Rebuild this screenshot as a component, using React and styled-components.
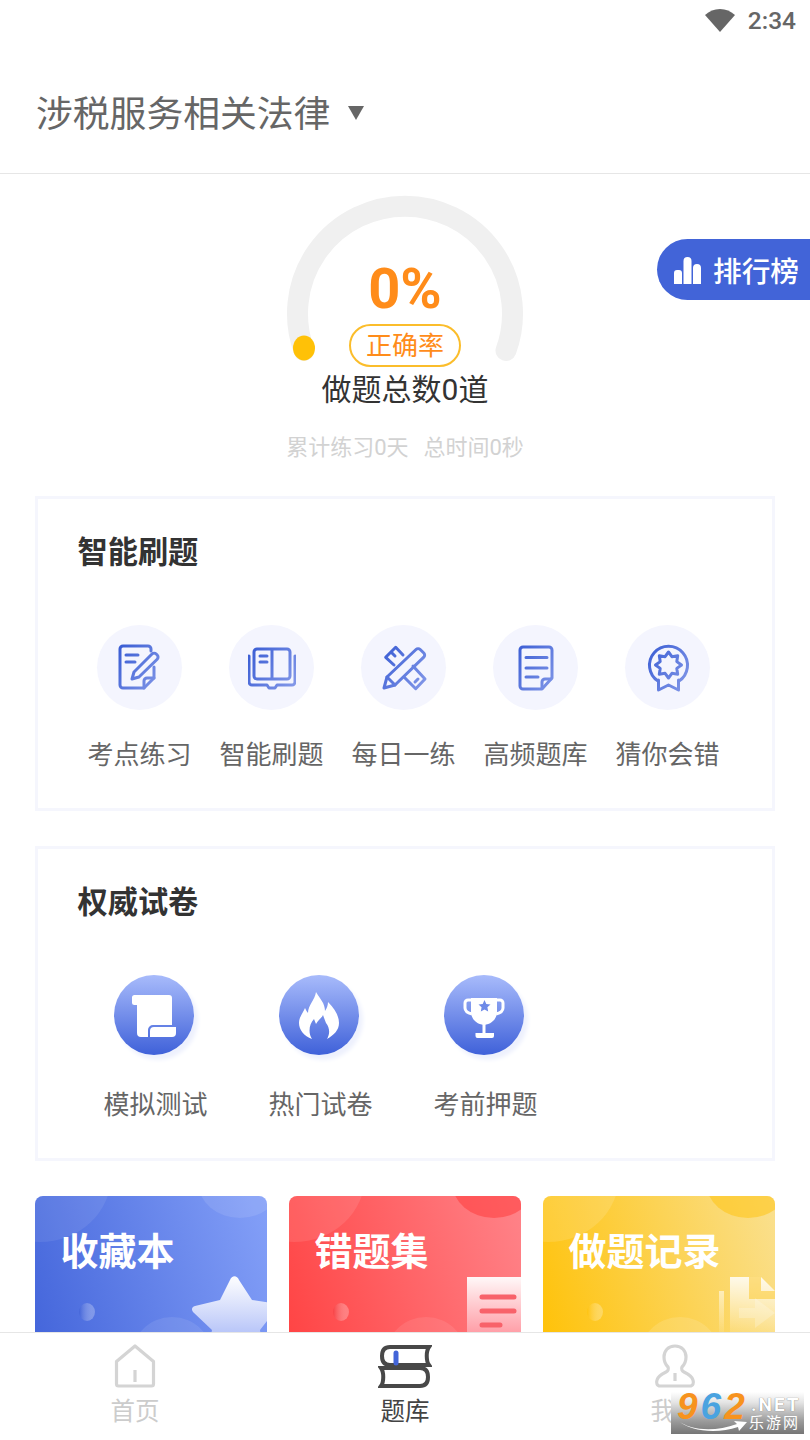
import styled, { createGlobalStyle } from 'styled-components';

const GlobalStyle = createGlobalStyle`
    html, body {
        margin: 0;
        padding: 0;
        background: #fff;
    }
    body {
        font-family: Roboto, "Noto Sans CJK SC", sans-serif;
    }
`

const Page = styled.div`
    position: relative;
    width: 810px;
    height: 1440px;
    display: flex;
    flex-direction: column;
    overflow: hidden;
    background: #fff;
`

const StatusBar = styled.div`
    height: 40px;
    display: flex;
    justify-content: flex-end;
    align-items: center;
    gap: 12px;
    padding: 0 14px 0 0;
    color: #666;
    font-size: 24.5px;
    font-weight: 500;
`

const Header = styled.div`
    height: 117px;
    display: flex;
    align-items: center;
    padding-left: 36px;
    padding-top: 16px;
    border-bottom: 1px solid #e6e6e6;
`

const Title = styled.span`
    font-size: 36.8px;
    color: #666;
    line-height: 50px;
`

const Caret = styled.span`
    width: 0;
    height: 0;
    margin: -4px 0 0 18px;
    border-left: 8px solid transparent;
    border-right: 8px solid transparent;
    border-top: 14px solid #666;
`

const Content = styled.div`
    flex: 1;
    min-height: 0;
    overflow: hidden;
`

const Stats = styled.div`
    position: relative;
    display: flex;
    flex-direction: column;
    align-items: center;
    padding: 85px 0 33px;
`

const GaugeArt = styled.svg`
    position: absolute;
    left: 285px;
    top: 20px;
`

const Percent = styled.div`
    position: relative;
    font-size: 56px;
    line-height: 60px;
    font-weight: 700;
    color: #ff8c1a;
`

const RatePill = styled.div`
    position: relative;
    box-sizing: border-box;
    width: 112px;
    height: 43px;
    margin-top: 5px;
    border: 2px solid #fbbd2b;
    border-radius: 22px;
    display: flex;
    align-items: center;
    justify-content: center;
    font-size: 26px;
    line-height: 36px;
    color: #ff8c1a;
`

const TotalText = styled.div`
    font-size: 30px;
    line-height: 42px;
    margin-top: 2px;
    color: #333;
`

const SubText = styled.div`
    display: flex;
    gap: 15px;
    margin-top: 22px;
    font-size: 22px;
    line-height: 30px;
    color: #d2d2d2;
`

const RankBadge = styled.div`
    position: absolute;
    top: 239px;
    right: 0;
    width: 153px;
    height: 61px;
    box-sizing: border-box;
    padding-left: 16px;
    display: flex;
    align-items: center;
    gap: 10px;
    border-radius: 31px 0 0 31px;
    background: #4264d8;
    color: #fff;
    font-size: 28.7px;
    font-weight: 500;
    white-space: nowrap;
`

const Panel = styled.div`
    box-sizing: border-box;
    height: 315px;
    margin: 0 35px 35px;
    border: 3.5px solid #f5f6fd;
    padding: 34px 0 0 ${p => p.$inset}px;
`

const PanelTitle = styled.div`
    margin-left: ${p => p.$shift}px;
    font-size: 30.2px;
    line-height: 40px;
    font-weight: 700;
    color: #333;
`

const Tools = styled.div`
    display: flex;
    margin-top: 52px;
`

const Tool = styled.div`
    width: ${p => p.$width}px;
    display: flex;
    flex-direction: column;
    align-items: center;
    gap: ${p => p.$gap}px;
`

const ToolLabel = styled.div`
    font-size: 26px;
    line-height: 36px;
    color: #666;
    white-space: nowrap;
`

const LightCircle = styled.div`
    width: 85px;
    height: 85px;
    border-radius: 50%;
    background: #f4f5fe;
    display: flex;
    align-items: center;
    justify-content: center;
`

const SolidCircle = styled.div`
    width: 80px;
    height: 80px;
    margin-right: 4px;
    border-radius: 50%;
    background: linear-gradient(180deg, #a8bbfb 0%, #3f61d9 100%);
    box-shadow: 4px 5px 4px #eef1fd;
    display: flex;
    align-items: center;
    justify-content: center;
`

const Promos = styled.div`
    display: grid;
    grid-template-columns: repeat(3, 232px);
    gap: 22px;
    margin: 0 35px;
`

const Promo = styled.div`
    position: relative;
    height: 200px;
    border-radius: 8px 8px 0 0;
    overflow: hidden;
    padding: 34px 0 0 25.5px;
    box-sizing: border-box;
    background: linear-gradient(${p => p.$angle}deg, ${p => p.$from}, ${p => p.$to});
    color: #fff;
    font-size: 38px;
    line-height: 44px;
    font-weight: 700;
`

const PromoArt = styled.svg`
    position: absolute;
    left: 0;
    top: 0;
`

const PromoText = styled.span`
    position: relative;
`

const TabBar = styled.div`
    height: 107px;
    flex-shrink: 0;
    border-top: 1px solid #e6e6e6;
    background: #fff;
    display: grid;
    grid-template-columns: repeat(3, 270px);
`

const Tab = styled.div`
    display: flex;
    flex-direction: column;
    align-items: center;
    padding-top: 11px;
    color: ${p => (p.$active ? '#444' : '#ccc')};
    font-size: 24.5px;
    line-height: 34px;
`

const TabText = styled.div`
    margin-top: 7px;
`

const Watermark = styled.div`
    position: absolute;
    left: 671px;
    top: 1392px;
    width: 133px;
    height: 42px;
    background: linear-gradient(180deg, #ffffff 0%, #e4e4e4 25%, #9a9a9a 70%, #767676 100%);
`

const MarkDigits = styled.span`
    position: absolute;
    left: 6px;
    top: 0;
    font-family: "Liberation Sans", sans-serif;
    font-size: 37px;
    line-height: 30px;
    font-weight: 700;
    font-style: italic;
    letter-spacing: 3px;
    color: #f7931e;
`

const BlueDigit = styled.span`
    color: #4aa3e0;
`

const MarkNet = styled.span`
    position: absolute;
    left: 80px;
    top: 4px;
    font-size: 19px;
    line-height: 18px;
    font-weight: 700;
    letter-spacing: 2px;
    color: #fff;
    text-shadow: 0 0 1px #555;
`

const MarkCn = styled.span`
    position: absolute;
    left: 78px;
    top: 22px;
    font-size: 15px;
    line-height: 18px;
    letter-spacing: 2px;
    color: #fff;
`

const MarkSwoosh = styled.svg`
    position: absolute;
    left: 6px;
    top: 26px;
`

const LineGradient = ({ id }) => (
    <defs>
        <linearGradient id={id} gradientUnits="userSpaceOnUse" x1="0" y1="8" x2="48" y2="40">
            <stop offset="0" stopColor="#3a5dd4" />
            <stop offset="1" stopColor="#8398e8" />
        </linearGradient>
    </defs>
)

const lineProps = id => ({
    fill: 'none',
    stroke: `url(#${id})`,
    strokeWidth: 3,
    strokeLinecap: 'round',
    strokeLinejoin: 'round',
})

const NoteIcon = () => (
    <svg width="48" height="48" viewBox="0 0 48 48">
        <LineGradient id="g-note" />
        <g {...lineProps('g-note')}>
            <path d="M35 7V5a3 3 0 0 0-3-3H7a3 3 0 0 0-3 3v36a3 3 0 0 0 3 3h21l10-10v-11" />
            <path d="M28 44v-7a3 3 0 0 1 3-3h7" />
            <path d="M10 11h12M10 18h9" />
            <path d="M16 35l2-7L36 10a3 3 0 0 1 4.200 0l1 1a3 3 0 0 1 0 4.200L23 33z" />
        </g>
    </svg>
)

const BookIcon = () => (
    <svg width="48" height="48" viewBox="0 0 48 48">
        <LineGradient id="g-book" />
        <g {...lineProps('g-book')}>
            <path d="M24 5H9a3 3 0 0 0-3 3v24a3 3 0 0 0 3 3h15V5h15a3 3 0 0 1 3 3v24a3 3 0 0 1-3 3H24" />
            <path d="M1 12v26a3 3 0 0 0 3 3h15l2 3h6l2-3h15a3 3 0 0 0 3-3V12" />
            <path d="M12 12h7M12 18h7" />
        </g>
    </svg>
)

const RulerPencilIcon = () => (
    <svg width="48" height="48" viewBox="0 0 48 48">
        <LineGradient id="g-ruler" />
        <g {...lineProps('g-ruler')}>
            <path d="M14 21L5.700 13.300 15.700 3.300 23 11" />
            <path d="M33 22L45 35 35.700 44.700 24 33" />
            <path d="M12 9l3 3M35 38l3-3" />
            <path d="M4 44l3-11L36 5.500a3 3 0 0 1 4.200 0l3.600 3.500a3 3 0 0 1 0 4.200L15 41z" />
            <path d="M7 33l8 8" />
        </g>
    </svg>
)

const PaperIcon = () => (
    <svg width="48" height="48" viewBox="0 0 48 48">
        <LineGradient id="g-paper" />
        <g {...lineProps('g-paper')}>
            <path d="M11 3h26a3 3 0 0 1 3 3v28L30 45H11a3 3 0 0 1-3-3V6a3 3 0 0 1 3-3z" />
            <path d="M30 44v-6a3 3 0 0 1 3-3h6" />
            <path d="M14 13.500h21M14 24h21M14 33h12" />
        </g>
    </svg>
)

const BadgeIcon = () => (
    <svg width="48" height="48" viewBox="0 0 48 48">
        <LineGradient id="g-badge" />
        <g {...lineProps('g-badge')}>
            <path d="M14 37A19 19 0 1 1 35 37" />
            <path d="M24.500 8L27.900 12.700 33.700 11.800 32.800 17.600 37.500 21 32.800 24.400 33.700 30.200 27.900 29.300 24.500 34 21.100 29.300 15.300 30.200 16.200 24.400 11.500 21 16.200 17.600 15.300 11.800 21.100 12.700Z" />
            <path d="M14.500 36v10l10-5 10 5V36" />
        </g>
    </svg>
)

const ScrollIcon = () => (
    <svg width="48" height="48" viewBox="0 0 48 48">
        <path fill="#fff" d="M4.500 4H39a3 3 0 0 1 3 3v27H23a5 5 0 0 0-5 5v7h-7a4 4 0 0 1-4-4V14H4.500A2.500 2.500 0 0 1 2 11.500v-5A2.500 2.500 0 0 1 4.500 4z" />
        <path fill="#fff" d="M24 36h22v6a4 4 0 0 1-4 4H20v-6a4 4 0 0 1 4-4z" />
    </svg>
)

const FlameIcon = () => (
    <svg width="48" height="48" viewBox="0 0 48 48">
        <path fill="#fff" d="M21 1C25 8 30 12 30 20C32 17 33 14 33 11C40 18 44 25 44 32C44 39 39 44 32 48C35 43 35 37 31 32C30 29 29 27 28 24C26 28 23 29 21 33L19 28C14 33 13 42 17 48C9 45 4 39 4 32C4 26 8 22 10 17C11 19 12 21 13 22C13 14 20 9 21 1Z" />
    </svg>
)

const TrophyIcon = () => (
    <svg width="48" height="48" viewBox="0 0 48 48">
        <path fill="none" stroke="#fff" strokeWidth="3" d="M12 9H8a3 3 0 0 0-3 3v5c0 3 3 5 7 6M36 9h4a3 3 0 0 1 3 3v5c0 3-3 5-7 6" />
        <path fill="#fff" d="M11 7h26v13c0 8-5 13-13 14-8-1-13-6-13-14z" />
        <path fill="#fff" d="M22.500 32h3v10h-3zM15.500 42h18.500v3a2 2 0 0 1-2 2H17.500a2 2 0 0 1-2-2z" />
        <path fill="#6e8ae8" d="M24.500 9l1.800 3.900 4.200.5-3.100 2.900.8 4.200-3.700-2.100-3.700 2.100.8-4.200-3.100-2.900 4.200-.5z" />
    </svg>
)

const BarsIcon = () => (
    <svg width="30" height="30" viewBox="0 0 30 30">
        <path fill="#fff" d="M1 18a3 3 0 0 1 3-3h2a3 3 0 0 1 3 3v11H1zM10.500 6a4 4 0 0 1 8 0v23h-8zM20 13a4 4 0 0 1 8 0v16h-8z" />
    </svg>
)

const WifiIcon = () => (
    <svg width="32" height="24" viewBox="0 0 32 24">
        <path fill="#666" d="M1 7C5.500 3 10 1 16 1s10.500 2 15 6L16 24z" />
    </svg>
)

const HomeIcon = () => (
    <svg width="44" height="44" viewBox="0 0 44 44">
        <path fill="none" stroke="#d4d4d4" strokeWidth="3.200" strokeLinejoin="round" d="M22 2L3.500 17.500V40a2 2 0 0 0 2 2h33a2 2 0 0 0 2-2V17.500z" />
        <path stroke="#d4d4d4" strokeWidth="3.200" d="M22 26v12" />
    </svg>
)

const BooksIcon = () => (
    <svg width="54" height="44" viewBox="0 0 54 44">
        <path fill="none" stroke="#484848" strokeWidth="4" strokeLinecap="round" d="M51 3H12C6 3 4 7 4 12s2 9 8 9h39c-3-4-3-14 0-18z" />
        <path fill="none" stroke="#484848" strokeWidth="4" strokeLinecap="round" d="M3 24h39c6 0 8 4 8 9s-2 9-8 9H3c3-4 3-14 0-18z" />
        <path stroke="#4264d8" strokeWidth="5" strokeLinecap="round" d="M18 9v10" />
    </svg>
)

const PersonIcon = () => (
    <svg width="44" height="44" viewBox="0 0 44 44">
        <path fill="none" stroke="#d4d4d4" strokeWidth="3.200" strokeLinejoin="round" d="M22 2c-7 0-11 5-11 11 0 4 2 8 4 10 1 2 0 4-2 5-4 2-8 4-9 8-1 3 0 6 3 6h30c3 0 4-3 3-6-1-4-5-6-9-8-2-1-3-3-2-5 2-2 4-6 4-10 0-6-4-11-11-11z" />
        <path stroke="#d4d4d4" strokeWidth="3.200" d="M22 29v8" />
    </svg>
)

const Blobs = ({ left, right, bottom, id, dot }) => (
    <>
        <ellipse cx="5" cy="-20" rx="71" ry="66" fill={left} />
        <ellipse cx="205" cy="-14" rx="42" ry="36" fill={right} />
        <ellipse cx="137" cy="165" rx="42" ry="44" fill={bottom} />
        <defs>
            <linearGradient id={id} x1="0" y1="0" x2="1" y2="0">
                <stop offset="0" stopColor={dot} stopOpacity="0.7" />
                <stop offset="1" stopColor="#fff" stopOpacity="0.25" />
            </linearGradient>
        </defs>
        <ellipse cx="52" cy="116" rx="8" ry="9" fill={`url(#${id})`} />
    </>
)

const StarArt = () => (
    <PromoArt width="232" height="200" viewBox="0 0 232 200">
        <Blobs id="dot-blue" left="rgba(255,255,255,0.08)" right="rgba(255,255,255,0.1)" bottom="rgba(255,255,255,0.09)" dot="#3d5fd6" />
        <defs>
            <linearGradient id="star-fill" gradientUnits="userSpaceOnUse" x1="0" y1="85" x2="0" y2="140">
                <stop offset="0" stopColor="#fff" stopOpacity="0.95" />
                <stop offset="1" stopColor="#b4c2f8" />
            </linearGradient>
        </defs>
        <path fill="url(#star-fill)" d="M195 84c2-5 7-5 9 0l13 20 28 4-20 26 5 36-30-15-30 15 7-36-19-18c-2-3-1-5 2-6l25-6z" />
    </PromoArt>
)

const ListArt = () => (
    <PromoArt width="232" height="200" viewBox="0 0 232 200">
        <Blobs id="dot-red" left="rgba(255,255,255,0.1)" right="rgba(255,60,60,0.55)" bottom="rgba(255,255,255,0.09)" dot="#f43c40" />
        <defs>
            <linearGradient id="list-fill" x1="0" y1="0" x2="0" y2="1">
                <stop offset="0" stopColor="#fff" stopOpacity="0.95" />
                <stop offset="1" stopColor="#ff9ca6" stopOpacity="0.9" />
            </linearGradient>
        </defs>
        <rect x="178" y="81" width="54" height="60" fill="url(#list-fill)" />
        <g stroke="#f8626a" strokeWidth="5" strokeLinecap="round">
            <path d="M193 101h32M193 115h32M193 129h18" />
        </g>
    </PromoArt>
)

const RecordArt = () => (
    <PromoArt width="232" height="200" viewBox="0 0 232 200">
        <Blobs id="dot-yellow" left="rgba(255,255,255,0.13)" right="rgba(255,193,7,0.5)" bottom="rgba(255,255,255,0.13)" dot="#ffc107" />
        <defs>
            <linearGradient id="rec-fill" x1="0" y1="0" x2="0" y2="1">
                <stop offset="0" stopColor="#fff" stopOpacity="0.85" />
                <stop offset="1" stopColor="#fff" stopOpacity="0" />
            </linearGradient>
            <linearGradient id="rec-bar" x1="0" y1="0" x2="0" y2="1">
                <stop offset="0" stopColor="#fff" stopOpacity="0.55" />
                <stop offset="1" stopColor="#fff" stopOpacity="0" />
            </linearGradient>
        </defs>
        <path fill="url(#rec-bar)" d="M176 95h5v50h-5z" />
        <path fill="url(#rec-fill)" d="M187 81h31l14 14v50h-45z" />
        <path fill="#fbcb38" opacity="0.6" d="M206 81h12v14h14v8h-26z" />
        <path fill="#fff" opacity="0.22" d="M196 112h16v-10l20 15-20 15v-10h-16z" />
    </PromoArt>
)

const practice = [
    { label: '考点练习', icon: <NoteIcon /> },
    { label: '智能刷题', icon: <BookIcon /> },
    { label: '每日一练', icon: <RulerPencilIcon /> },
    { label: '高频题库', icon: <PaperIcon /> },
    { label: '猜你会错', icon: <BadgeIcon /> },
]

const papers = [
    { label: '模拟测试', icon: <ScrollIcon /> },
    { label: '热门试卷', icon: <FlameIcon /> },
    { label: '考前押题', icon: <TrophyIcon /> },
]

const App = () => {
    return (
        <Page>
            <GlobalStyle />
            <StatusBar>
                <WifiIcon />
                <span>2:34</span>
            </StatusBar>
            <Header>
                <Title>涉税服务相关法律</Title>
                <Caret />
            </Header>
            <Content>
                <Stats>
                    <GaugeArt width="240" height="180" viewBox="0 0 240 180">
                        <path d="M19 156.500A107.500 107.500 0 1 1 221 156.500" fill="none" stroke="#f0f0f0" strokeWidth="21" strokeLinecap="round" />
                        <ellipse cx="19" cy="154" rx="11" ry="12.500" fill="#ffc107" />
                    </GaugeArt>
                    <Percent>0%</Percent>
                    <RatePill>正确率</RatePill>
                    <TotalText>做题总数0道</TotalText>
                    <SubText>
                        <span>累计练习0天</span>
                        <span>总时间0秒</span>
                    </SubText>
                </Stats>
                <Panel $inset={35.5}>
                    <PanelTitle $shift={4}>智能刷题</PanelTitle>
                    <Tools>
                        {practice.map(item => (
                            <Tool key={item.label} $width={132} $gap={27}>
                                <LightCircle>{item.icon}</LightCircle>
                                <ToolLabel>{item.label}</ToolLabel>
                            </Tool>
                        ))}
                    </Tools>
                </Panel>
                <Panel $inset={35}>
                    <PanelTitle $shift={4.5}>权威试卷</PanelTitle>
                    <Tools>
                        {papers.map(item => (
                            <Tool key={item.label} $width={165} $gap={32}>
                                <SolidCircle>{item.icon}</SolidCircle>
                                <ToolLabel>{item.label}</ToolLabel>
                            </Tool>
                        ))}
                    </Tools>
                </Panel>
                <Promos>
                    <Promo $angle={72} $from="#4062d9" $to="#84a0f8">
                        <StarArt />
                        <PromoText>收藏本</PromoText>
                    </Promo>
                    <Promo $angle={72} $from="#ff4040" $to="#ff8389">
                        <ListArt />
                        <PromoText>错题集</PromoText>
                    </Promo>
                    <Promo $angle={72} $from="#ffc000" $to="#fae08f">
                        <RecordArt />
                        <PromoText>做题记录</PromoText>
                    </Promo>
                </Promos>
            </Content>
            <TabBar>
                <Tab>
                    <HomeIcon />
                    <TabText>首页</TabText>
                </Tab>
                <Tab $active>
                    <BooksIcon />
                    <TabText>题库</TabText>
                </Tab>
                <Tab>
                    <PersonIcon />
                    <TabText>我的</TabText>
                </Tab>
            </TabBar>
            <RankBadge>
                <BarsIcon />
                <span>排行榜</span>
            </RankBadge>
            <Watermark>
                <MarkDigits>9<BlueDigit>6</BlueDigit>2</MarkDigits>
                <MarkNet>.NET</MarkNet>
                <MarkCn>乐游网</MarkCn>
                <MarkSwoosh width="72" height="16" viewBox="0 0 72 16">
                    <path fill="#fff" d="M0 2c14 11 38 12 60 4l-3-3 13 1-8 9-1-4C40 16 14 14 0 2z" />
                </MarkSwoosh>
            </Watermark>
        </Page>
    )
}

export default App;
